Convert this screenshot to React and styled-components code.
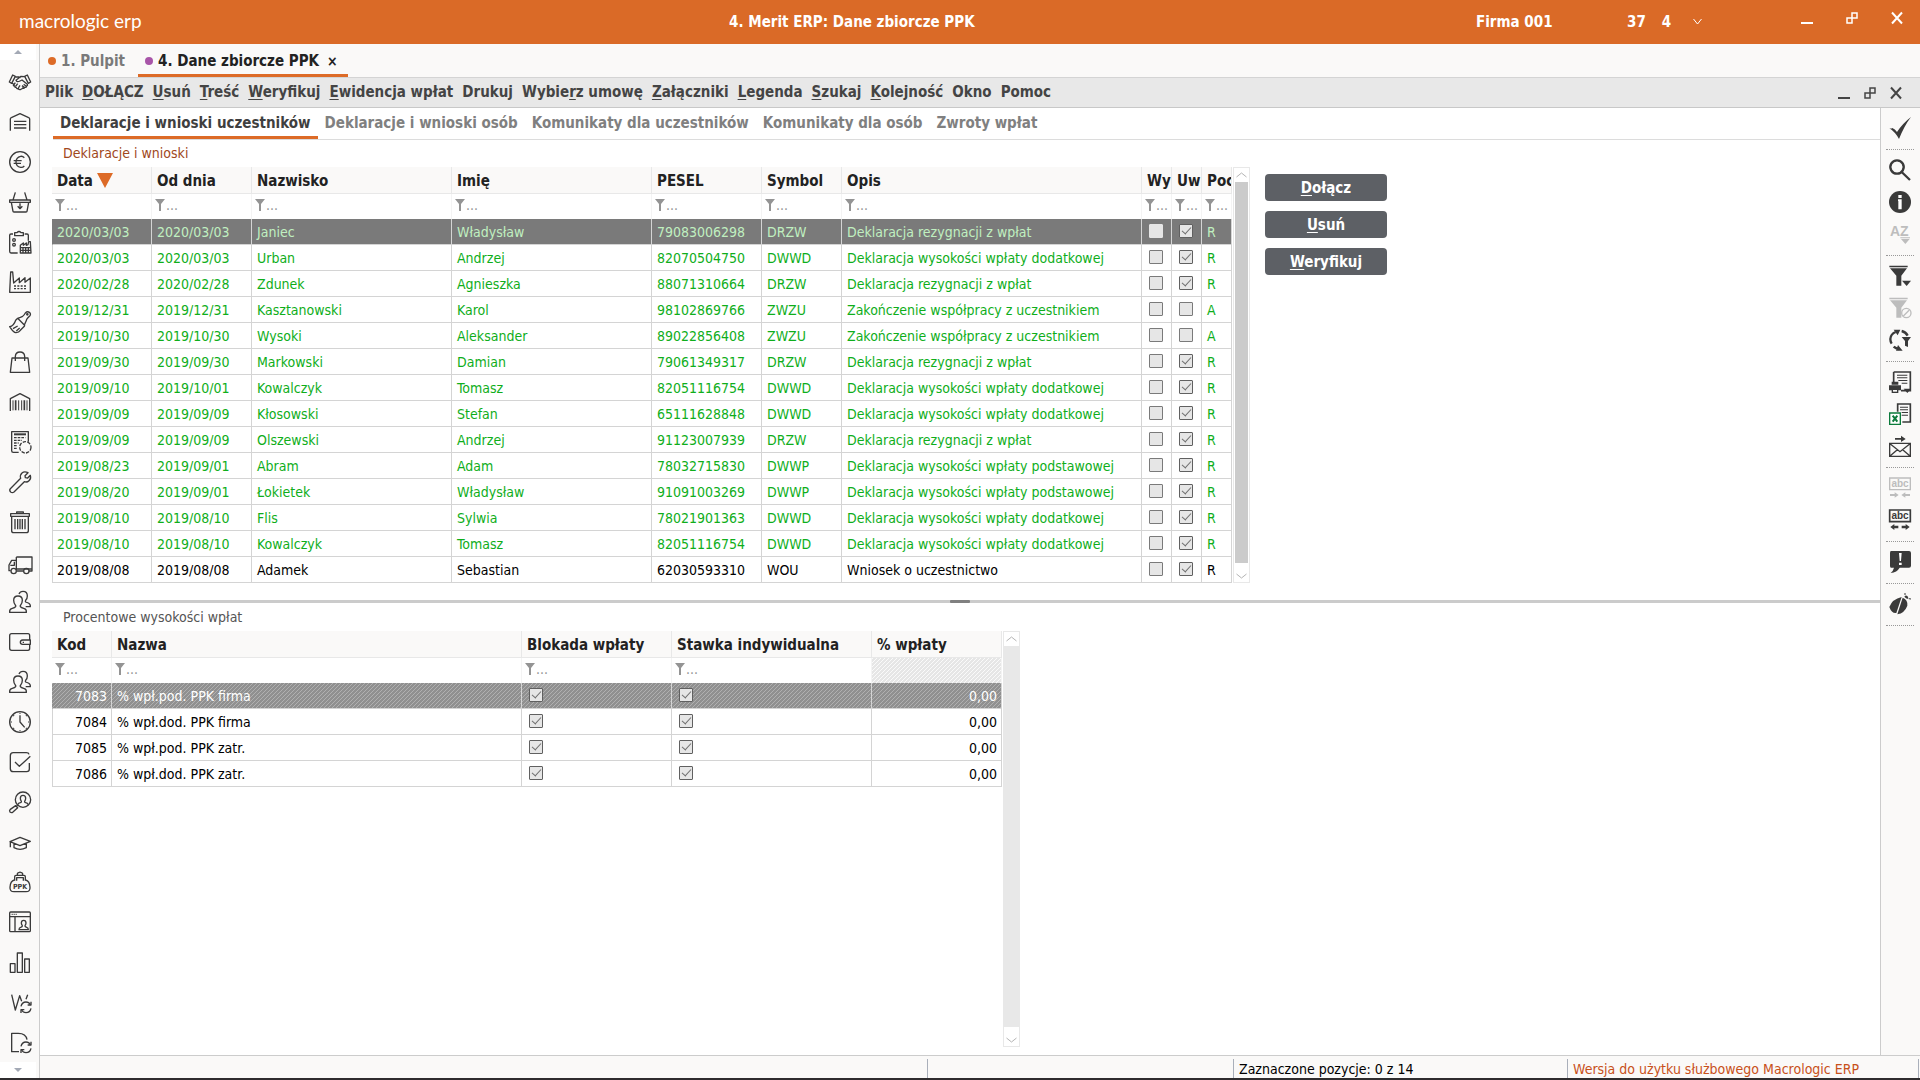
import { useState } from 'react';
import styled, { createGlobalStyle, css } from 'styled-components';

const MENU = [
  ['', '', 'Plik'],
  ['', 'D', 'OŁĄCZ'],
  ['', 'U', 'suń'],
  ['', 'T', 'reść'],
  ['', 'W', 'eryfikuj'],
  ['', 'E', 'widencja wpłat'],
  ['', '', 'Drukuj'],
  ['Wybie', 'r', 'z umowę'],
  ['', 'Z', 'ałączniki'],
  ['', 'L', 'egenda'],
  ['', 'S', 'zukaj'],
  ['', 'K', 'olejność'],
  ['', '', 'Okno'],
  ['', '', 'Pomoc'],
];

const SECTIONS = [
  'Deklaracje i wnioski uczestników',
  'Deklaracje i wnioski osób',
  'Komunikaty dla uczestników',
  'Komunikaty dla osób',
  'Zwroty wpłat',
];

const DESCRIPTIONS = {
  DRZW: 'Deklaracja rezygnacji z wpłat',
  DWWD: 'Deklaracja wysokości wpłaty dodatkowej',
  DWWP: 'Deklaracja wysokości wpłaty podstawowej',
  ZWZU: 'Zakończenie współpracy z uczestnikiem',
  WOU: 'Wniosek o uczestnictwo',
};

// date, valid from, surname, name, PESEL, symbol, checked, source
const DECLARATIONS = [
  ['2020/03/03', '2020/03/03', 'Janiec', 'Władysław', '79083006298', 'DRZW', true, 'R'],
  ['2020/03/03', '2020/03/03', 'Urban', 'Andrzej', '82070504750', 'DWWD', true, 'R'],
  ['2020/02/28', '2020/02/28', 'Zdunek', 'Agnieszka', '88071310664', 'DRZW', true, 'R'],
  ['2019/12/31', '2019/12/31', 'Kasztanowski', 'Karol', '98102869766', 'ZWZU', false, 'A'],
  ['2019/10/30', '2019/10/30', 'Wysoki', 'Aleksander', '89022856408', 'ZWZU', false, 'A'],
  ['2019/09/30', '2019/09/30', 'Markowski', 'Damian', '79061349317', 'DRZW', true, 'R'],
  ['2019/09/10', '2019/10/01', 'Kowalczyk', 'Tomasz', '82051116754', 'DWWD', true, 'R'],
  ['2019/09/09', '2019/09/09', 'Kłosowski', 'Stefan', '65111628848', 'DWWD', true, 'R'],
  ['2019/09/09', '2019/09/09', 'Olszewski', 'Andrzej', '91123007939', 'DRZW', true, 'R'],
  ['2019/08/23', '2019/09/01', 'Abram', 'Adam', '78032715830', 'DWWP', true, 'R'],
  ['2019/08/20', '2019/09/01', 'Łokietek', 'Władysław', '91091003269', 'DWWP', true, 'R'],
  ['2019/08/10', '2019/08/10', 'Flis', 'Sylwia', '78021901363', 'DWWD', true, 'R'],
  ['2019/08/10', '2019/08/10', 'Kowalczyk', 'Tomasz', '82051116754', 'DWWD', true, 'R'],
  ['2019/08/08', '2019/08/08', 'Adamek', 'Sebastian', '62030593310', 'WOU', true, 'R'],
];

const DECLARATION_COLUMNS = [
  ['Data', 100],
  ['Od dnia', 100],
  ['Nazwisko', 200],
  ['Imię', 200],
  ['PESEL', 110],
  ['Symbol', 80],
  ['Opis', 300],
  ['Wy', 30],
  ['Uw', 30],
  ['Poc', 30],
];

const RATES = [
  ['7083', '% wpł.pod. PPK firma'],
  ['7084', '% wpł.dod. PPK firma'],
  ['7085', '% wpł.pod. PPK zatr.'],
  ['7086', '% wpł.dod. PPK zatr.'],
];

const RATE_COLUMNS = [
  ['Kod', 60],
  ['Nazwa', 410],
  ['Blokada wpłaty', 150],
  ['Stawka indywidualna', 200],
  ['% wpłaty', 130],
];

const people = (
  <>
    <path d="M2 64q-1-9 6-11 10-3 12-6 1-3-1-5-5-6-5-14 0-13 13-13t13 13q0 8-5 14-2 2-1 5 2 3 12 6 7 2 6 11Z" />
    <path d="M30 9q3-8 12-8 13 0 13 14 0 8-5 13-2 3 0 5l8 3q7 3 6 11H50" />
  </>
);

const refresh = (
  <>
    <path d="M36 46q3-13 15-13 9 0 13 8M66 52q-3 13-15 13-9 0-13-8" />
    <path d="M66 32v10H56M36 66V56h10" />
  </>
);

const smallPerson = 'M30 56q0-6 5-7 6-2 5-5-3-4-3-8 0-8 7-8t7 8q0 4-3 8-1 3 5 5 5 1 5 7Z';

// every glyph is drawn on a 66 x 66 grid
const MODULES = [
  ['Kontrahenci', <>
    <path d="M11 12 1 33l7 4 11-21ZM55 12l10 21-7 4-11-21Z" />
    <path d="M19 18h11l5 2M47 17l-11-1-15 12q3 7 12 2l6-3 16 13q2 4-3 5" />
    <path d="m8 36 6 3M14 39q-3 5 3 6 0 5 5 5 1 4 6 3 2 4 8 2M19 35l-5 7M26 38l-6 8M33 43l-5 8M53 45q-1 5-6 4-2 5-6 2-2 4-6 3M44 40l8 6M39 44l7 5" />
  </>],
  ['Magazyn', <path d="M4 59V24q0-3 3-4L33 8l26 12q3 1 3 4v35M15 31h37M15 41h37M15 51h37" />],
  ['Finanse', <>
    <circle cx="33" cy="33" r="31" />
    <path d="M46 20q-5-5-11-4-14 3-14 17t14 16q6 1 11-4M14 29h24M14 37h22" />
  </>],
  ['Zakupy', <>
    <path d="M12 27 19 4M54 27 47 4M2 27h62v7H2ZM7 34l5 27q0 2 3 2h36q3 0 3-2l5-27" />
    <path d="M33 37v16M26 46l7 7 7-7" />
  </>],
  ['Zlecenia', <>
    <path d="M12 9H6q-4 0-4 4v48q0 5 4 5h20M47 9h7q4 0 4 4v16M17 5h7q6-7 12 0h7v9H17Z" />
    <circle cx="15" cy="27" r="4" />
    <circle cx="15" cy="41" r="4" />
    <path d="M34 66V43l9-7v7l9-7v7l5-2 2-9h5l2 34ZM34 50h30M34 58h30M42 50v14M50 50v14M58 50v14" />
  </>],
  ['Produkcja', <>
    <path d="M2 64 5 3h6l3 33 17-15v14l17-15v14l16-13v43Z" />
    <path strokeDasharray="6 4" d="M15 45h40M15 53h40" />
  </>],
  ['Remonty', <>
    <path d="m26 22 20 20q2 2 0 4L34 58q-4 6-13 7Q14 66 2 47q12-1 18-19ZM26 22l8-3 7-3q4-3 8-10 6-6 12-2 6 5 1 11-6 6-9 10-1 4-3 8l-4 9" />
    <path d="m12 53 14-8M22 60l10-9" />
    <circle cx="55" cy="10" r="2" />
  </>],
  ['Sprzedaż', <path d="M9 21h48l5 43H4ZM19 30V16Q20 3 33 3t14 13v14" />],
  ['Kody kreskowe', <>
    <path d="M4 60V23L33 8l29 15v37" />
    <path strokeWidth="3" d="M12 28v30M29 28v30M38 28v30M54 28v30" />
    <path strokeWidth="5" d="M20 28v30M46 28v30" />
  </>],
  ['Rozliczenia', <>
    <path d="M29 64H13q-5 0-5-5V2h50v30" />
    <path strokeWidth="6" d="M15 10h36" />
    <path strokeDasharray="8 3" d="M15 20h34M15 28h24M15 36h14M15 44h10M15 52h10" />
    <circle strokeDasharray="10 4" cx="49" cy="49" r="17" />
  </>],
  ['Serwis', <path d="m57 5-9 9 1 6 7 1 8-8q3 10-4 16-6 6-14 3L15 63q-5 4-10 0-5-5-1-10l31-31q-3-10 4-16 7-6 18-1Z" />],
  ['Kosz', <>
    <path d="M5 8h56v8H5ZM23 8V3h20v5M8 16v43q0 6 6 6h38q6 0 6-6V16" />
    <path d="M18 24v31M26 24v31M33 24v31M40 24v31M48 24v31" />
  </>],
  ['Transport', <>
    <path d="M22 18h47v42h-9M44 60H23M22 54h47M22 18v39M22 28H8L0 42v17h5M4 43h12V32" />
    <circle cx="14" cy="60" r="8" />
    <circle cx="52" cy="60" r="8" />
  </>],
  ['Kadry', people],
  ['Płace', <>
    <path d="M62 27V14q0-6-5-6H8q-6 0-6 6v38q0 6 6 6h49q5 0 5-6V40" />
    <path d="M64 27H41q-7 1-7 7t7 6h23ZM41 34h4" />
  </>],
  ['Pracownicy', people],
  ['Czas pracy', <>
    <circle cx="33" cy="33" r="31" />
    <path d="M33 13v20l14 16M33 5v3M33 58v3M5 33h3M58 33h3M13 13l2 2M53 13l-2 2M13 53l2-2M53 53l-2-2" />
  </>],
  ['Zadania', <path d="M61 36v18q0 8-8 8H13q-9 0-9-9V14q0-9 9-9h39q7 0 8 5M18 33l13 13 33-30" />],
  ['Rekrutacja', <>
    <circle cx="42" cy="26" r="23" />
    <path d="m26 43-5 4M20 44l6 6-15 14q-4 2-8-1-3-4 1-8ZM27 41q1-5 7-6 4-2 3-4-3-4-3-9 0-9 8-9t8 9q0 5-3 9-1 2 3 4 6 1 7 6" />
  </>],
  ['Szkolenia', <path d="m3 32 30-13 31 12-31 13ZM15 38v12q18 10 37 0V38M4 33v16" />],
  ['PPK', <>
    <path d="M16 27q-12 3-13 22-1 13 12 13h36q13 0 12-13-1-19-13-22" />
    <path d="M17 29V17q0-4 4-4h24q4 0 4 4v12M23 29v-9h20v9M26 13q-3-7 3-8 4-3 8 0 6 1 3 8" />
    <text x="33" y="53" textAnchor="middle">PPK</text>
  </>],
  ['Portal', <>
    <path d="M5 3h56q3 0 3 3v53q0 3-3 3H5q-3 0-3-3V6q0-3 3-3ZM2 17h62M18 17v45M8 10h3M14 10h3M20 10h3" />
    <path d={smallPerson} />
  </>],
  ['Raporty', <path d="M4 38h14v26H4ZM25 6h15v58H25ZM47 24h14v40H47Z" />],
  ['Wymiana W', <><path d="m8 11 11 46L32 14l6 17M56 11l-5 14" />{refresh}</>],
  ['Wymiana D', <><path d="M30 62H8V7h20q23 0 26 19" />{refresh}</>],
];

const pageSheet = 'M14 3h50v56H36M14 3v30';
const funnel = 'M1 2h55v5H1ZM3 10h51L37 32v30H22V32Z';

const TOOLS = [
  ['Zatwierdź', <path d="M0 33q6 3 10 0 8 3 14 12Q40 20 66 0 46 26 30 66 18 44 0 33Z" />],
  null,
  ['Szukaj', <path fill="none" stroke="currentColor" strokeWidth="7" d="M24 4a20 20 0 1 0 .1 0ZM38 39l25 24" />],
  ['Informacje', <>
    <circle cx="33" cy="33" r="33" />
    <path fill="#ffffff" d="M28 12h10v9H28ZM27 25h11v30H28V30h-1Z" />
  </>],
  ['Sortuj', <>
    <text x="3" y="39" fontSize="42">AZ</text>
    <path d="M34 43h29v3H34ZM36 48h26L49 63Z" />
  </>, true],
  null,
  ['Filtr', <><path d={funnel} /><path d="M39 47h27L53 63Z" /></>],
  ['Wyłącz filtr', <>
    <path d={funnel} />
    <circle cx="52" cy="48" r="14" fill="#faf9f8" stroke="currentColor" strokeWidth="4" />
    <path fill="none" stroke="currentColor" strokeWidth="4" d="M43 57 61 39" />
  </>, true],
  ['Odśwież filtr', <>
    <path fill="none" stroke="currentColor" strokeWidth="7" d="M38 6q12 3 18 14M20 9Q5 15 4 30q0 8 4 14M14 53q6 6 16 7" />
    <path d="m14 2 20 0-8 17ZM27 48l14 17-20 0ZM38 24h28l-9 12v18l-9-4V36Z" />
  </>],
  null,
  ['Drukuj', <>
    <path fill="none" stroke="currentColor" strokeWidth="5" d={pageSheet} />
    <path d="M24 11h31v3H24ZM24 19h31v3H24ZM28 27h27v3H28ZM38 35h17v3H38ZM8 32h20v9H8ZM0 43h36v15H0ZM8 54h20v12H8ZM44 53h22L55 66Z" />
    <path fill="#faf9f8" d="M12 57h12v5H12Z" />
  </>],
  ['Eksport do arkusza', <>
    <path fill="none" stroke="currentColor" strokeWidth="5" d="M26 26V3h38v54H40" />
    <path d="M33 11h24v3H33ZM33 19h24v3H33ZM38 27h19v3H38ZM38 35h19v3H38Z" />
    <path fill="#ffffff" stroke="#0b7a3b" strokeWidth="4" d="M2 30h32v34H2Z" />
    <path fill="none" stroke="#0b7a3b" strokeWidth="6" d="m11 38 14 18M25 38 11 56" />
  </>],
  ['Wyślij', <>
    <path d="M18 9h18V2l14 10-14 9v-7H18Z" />
    <path fill="none" stroke="currentColor" strokeWidth="4" d="M2 25h62v39H2ZM3 26l30 24 30-24M3 63l22-19M63 63 41 44" />
  </>],
  null,
  ['Zwiń tekst', <>
    <path fill="none" stroke="currentColor" strokeWidth="4" d="M2 3h62v35H2Z" />
    <text x="33" y="30" textAnchor="middle" fontSize="30">abc</text>
    <path d="M3 51h14v-5l12 8-12 8v-5H3ZM63 51H49v-5l-12 8 12 8v-5h14Z" />
  </>, true],
  ['Rozwiń tekst', <>
    <path fill="none" stroke="currentColor" strokeWidth="5" d="M2 3h62v35H2Z" />
    <text x="33" y="30" textAnchor="middle" fontSize="30">abc</text>
    <path d="M28 50H16v-5L4 54l12 9v-5h12ZM38 50h12v-5l12 9-12 9v-5H38Z" />
  </>],
  null,
  ['Komunikaty', <>
    <path d="M6 0h54q6 0 6 6v38q0 6-6 6H32q-8 14-27 16 8-7 10-16H6q-3 0-3-6V6q0-6 3-6Z" />
    <path fill="#ffffff" d="M30 6h8l-2 24h-4ZM30 35h8v7h-8Z" />
  </>],
  null,
  ['Błędy', <>
    <path d="M1 42Q10 18 38 12L22 60Q8 62 1 42ZM41 14q16 6 14 24-8 22-30 26ZM46 11q4-6 9-2 5 4 1 9-5-1-10-7Z" />
    <path fill="none" stroke="currentColor" strokeWidth="3" d="M48 6V0M59 17l7 1" />
  </>],
  null,
];

const FunnelIcon = () => (
  <svg width="10" height="12" viewBox="0 0 10 12" fill="currentColor" aria-hidden="true">
    <path d="M0 0h10L6 5v7H4V5Z" />
  </svg>
);

const Chevron = ({ up }) => (
  <svg width="11" height="6" viewBox="0 0 11 6" fill="none" stroke="currentColor" aria-hidden="true">
    <path d={up ? 'M0.5 5 5.5 1l5 4' : 'M0.5 1l5 4 5-4'} />
  </svg>
);

const WindowButtons = ({ light }) => (
  <WindowControls $light={light}>
    <WindowButton type="button" aria-label="Minimalizuj">
      <svg width="12" height="12" viewBox="0 0 12 12"><path fill="currentColor" d="M0 10h12v2H0Z" /></svg>
    </WindowButton>
    <WindowButton type="button" aria-label="Przywróć">
      <svg width="12" height="12" viewBox="0 0 12 12" fill="none" stroke="currentColor" strokeWidth="1.5">
        <path d="M6 1h5v5H6ZM1 6h5v5H1Z" />
      </svg>
    </WindowButton>
    <WindowButton type="button" aria-label="Zamknij">
      <svg width="12" height="12" viewBox="0 0 12 12" fill="none" stroke="currentColor" strokeWidth="2">
        <path d="m1 0.5 10 11M11 0.5 1 11.5" />
      </svg>
    </WindowButton>
  </WindowControls>
);

const ScrollBar = ({ full }) => (
  <ScrollTrack $full={full} aria-hidden="true">
    <ScrollEnd><Chevron up /></ScrollEnd>
    <ScrollThumb $full={full} />
    <ScrollEnd $bottom><Chevron /></ScrollEnd>
  </ScrollTrack>
);

const GridHead = ({ columns, sorted, locked }) => (
  <>
    <colgroup>
      {columns.map(([name, width]) => <Col key={name} $width={width} />)}
    </colgroup>
    <thead>
      <tr>
        {columns.map(([name]) => (
          <HeadCell key={name} scope="col">{name}{name === sorted && <SortMark />}</HeadCell>
        ))}
      </tr>
      <tr>
        {columns.map(([name]) => (
          <FilterCell key={name} $locked={name === locked}>
            {name !== locked && (
              <FilterButton type="button" aria-label={`Filtr: ${name}`}><FunnelIcon />...</FilterButton>
            )}
          </FilterCell>
        ))}
      </tr>
    </thead>
  </>
);

const App = () => {
  const [section, setSection] = useState(0);
  const [row, setRow] = useState(0);
  const [rate, setRate] = useState(0);

  return (
    <Page>
      <GlobalStyle />

      <TitleBar>
        <Logo>macrologic erp</Logo>
        <strong>4. Merit ERP: Dane zbiorcze PPK</strong>
        <strong>Firma 001</strong>
        <Counters>
          <span>37</span>
          <span>4</span>
          <svg width="9" height="7" viewBox="0 0 9 7" fill="none" stroke="currentColor"><path d="m0.5 1 4 5 4-5" /></svg>
        </Counters>
        <WindowButtons light />
      </TitleBar>

      <Body>
        <SideBar>
          <SideScroll type="button" aria-label="W górę"><SideArrow $up /></SideScroll>
          {MODULES.map(([name, drawing]) => (
            <ModuleButton key={name} type="button" aria-label={name}>
              <LineIcon viewBox="0 0 66 66">{drawing}</LineIcon>
            </ModuleButton>
          ))}
          <SideScroll type="button" aria-label="W dół"><SideArrow /></SideScroll>
        </SideBar>

        <Main>
          <Tabs>
            <Tab type="button"><Dot $color="#dd6b27" />1. Pulpit</Tab>
            <Tab type="button" $active><Dot $color="#a855a8" />4. Dane zbiorcze PPK<Close>×</Close></Tab>
          </Tabs>

          <MenuBar>
            {MENU.map(([before, key, after]) => (
              <MenuItem key={before + key + after} type="button">{before}<u>{key}</u>{after}</MenuItem>
            ))}
            <WindowButtons />
          </MenuBar>

          <Workspace>
            <Content>
              <SectionTabs>
                {SECTIONS.map((name, i) => (
                  <SectionTab key={name} type="button" $active={i === section} onClick={() => setSection(i)}>
                    {name}
                  </SectionTab>
                ))}
              </SectionTabs>

              <Pane>
                <PaneTitle $accent>Deklaracje i wnioski</PaneTitle>
                <PaneRow>
                  <Grid $width={1180}>
                    <GridHead columns={DECLARATION_COLUMNS} sorted="Data" />
                    <tbody>
                      {DECLARATIONS.map(([date, from, surname, name, pesel, symbol, checked, source], i) => (
                        <Row key={i} $selected={i === row} $sent={symbol !== 'WOU'} onClick={() => setRow(i)}>
                          <Cell>{date}</Cell>
                          <Cell>{from}</Cell>
                          <Cell>{surname}</Cell>
                          <Cell>{name}</Cell>
                          <Cell>{pesel}</Cell>
                          <Cell>{symbol}</Cell>
                          <Cell>{DESCRIPTIONS[symbol]}</Cell>
                          <Cell $check><Check aria-label="Wy" checked={false} readOnly $bare={i === row} /></Cell>
                          <Cell $check><Check aria-label="Uw" checked={checked} readOnly /></Cell>
                          <Cell>{source}</Cell>
                        </Row>
                      ))}
                    </tbody>
                  </Grid>
                  <ScrollBar />
                  <Actions>
                    <Action type="button"><u>D</u>ołącz</Action>
                    <Action type="button"><u>U</u>suń</Action>
                    <Action type="button"><u>W</u>eryfikuj</Action>
                  </Actions>
                </PaneRow>
              </Pane>

              <Splitter><SplitterGrip /></Splitter>

              <Pane $grow>
                <PaneTitle>Procentowe wysokości wpłat</PaneTitle>
                <PaneRow $grow>
                  <div>
                    <Grid $width={950}>
                      <GridHead columns={RATE_COLUMNS} locked="% wpłaty" />
                      <tbody>
                        {RATES.map(([code, name], i) => (
                          <Row key={code} $inactive={i === rate} onClick={() => setRate(i)}>
                            <Cell $right>{code}</Cell>
                            <Cell>{name}</Cell>
                            <Cell $check><Check aria-label="Blokada wpłaty" checked readOnly /></Cell>
                            <Cell $check><Check aria-label="Stawka indywidualna" checked readOnly /></Cell>
                            <Cell $right>0,00</Cell>
                          </Row>
                        ))}
                      </tbody>
                    </Grid>
                  </div>
                  <ScrollBar full />
                </PaneRow>
              </Pane>
            </Content>

            <ToolBar>
              {TOOLS.map((tool, i) => (tool ? (
                <ToolButton key={tool[0]} type="button" aria-label={tool[0]} disabled={tool[2]}>
                  <SolidIcon viewBox="0 0 66 66">{tool[1]}</SolidIcon>
                </ToolButton>
              ) : <ToolSeparator key={i} />))}
            </ToolBar>
          </Workspace>

          <StatusBar>
            <StatusCell />
            <StatusCell />
            <StatusCell>Zaznaczone pozycje: 0 z 14</StatusCell>
            <StatusCell $accent>Wersja do użytku służbowego Macrologic ERP</StatusCell>
          </StatusBar>
        </Main>
      </Body>
      <BottomEdge />
    </Page>
  );
};

export default App;

const GlobalStyle = createGlobalStyle`
  * {
    box-sizing: border-box;
  }

  body {
    margin: 0;
    background: #ffffff;
  }

  body, button, input {
    font-family: 'DejaVu Sans Condensed', 'Noto Sans', sans-serif;
    font-size: 14px;
  }

  button {
    margin: 0;
    padding: 0;
    border: 0;
    background: none;
    color: inherit;
    cursor: pointer;
  }

  svg {
    display: block;
    overflow: visible;
  }

  u {
    text-underline-offset: 2px;
  }
`;

const bold = css`
  font-size: 15px;
  font-weight: bold;
`;

const Page = styled.div`
  display: flex;
  flex-direction: column;
  min-height: 100vh;
`;

const TitleBar = styled.header`
  display: grid;
  grid-template-columns: 710fr 747fr 151fr 174fr 102fr;
  align-items: center;

  height: 44px;
  padding: 0 17px 9px 19px;

  background: #da6a27;
  color: #ffffff;

  & > strong {
    padding-top: 8px;

    ${bold}
  }
`;

const Logo = styled.div`
  padding-top: 6px;

  font-family: Lato, sans-serif;
  font-size: 19px;
`;

const Counters = styled.div`
  display: flex;
  align-items: center;
  gap: 16px;
  padding-top: 8px;

  ${bold}

  & > svg {
    margin-left: 6px;
  }
`;

const WindowControls = styled.div`
  display: flex;
  gap: ${(p) => (p.$light ? 33 : 14)}px;
  margin-left: auto;

  color: ${(p) => (p.$light ? '#ffffff' : '#444444')};
`;

const WindowButton = styled.button`
  display: block;
`;

const Body = styled.div`
  display: flex;
  flex: 1;
`;

const SideBar = styled.nav`
  display: flex;
  flex-direction: column;

  width: 40px;

  border-right: 1px solid #cccccc;
  background: #faf9f8;
`;

const SideScroll = styled.button`
  display: flex;
  align-items: center;
  justify-content: center;

  width: 36px;
  height: 16px;

  background: #ffffff;

  &:first-child {
    margin-bottom: 2px;
  }
`;

const SideArrow = styled.span`
  border: 4px solid transparent;
  border-${(p) => (p.$up ? 'bottom' : 'top')}-color: #a3a9b5;
  border-${(p) => (p.$up ? 'top' : 'bottom')}-width: 0;
`;

const ModuleButton = styled.button`
  display: flex;
  align-items: center;
  justify-content: center;

  height: 40px;
`;

const LineIcon = styled.svg`
  width: 22px;
  height: 22px;

  fill: none;
  stroke: #3a3a3a;
  stroke-width: 4;
  stroke-linejoin: round;

  & text {
    fill: #3a3a3a;
    stroke: none;
    font-size: 21px;
    font-weight: bold;
  }
`;

const Main = styled.main`
  display: flex;
  flex: 1;
  flex-direction: column;
  min-width: 0;
`;

const Tabs = styled.div`
  display: flex;
  gap: 3px;

  height: 34px;
  padding-left: 8px;

  border-bottom: 1px solid #d4d4d4;
  background: #faf9f8;
`;

const Tab = styled.button`
  display: flex;
  align-items: center;
  gap: 5px;

  padding: 3px 10px 0 0;

  border-bottom: 3px solid transparent;
  color: #7a7a7a;

  ${bold}

  ${(p) => p.$active && css`
    padding-left: 7px;

    border-color: #dd6b27;
    color: #222222;
  `}
`;

const Dot = styled.span`
  width: 8px;
  height: 8px;

  border-radius: 50%;
  background: ${(p) => p.$color};
`;

const Close = styled.span`
  margin-left: 3px;

  font-size: 14px;
`;

const MenuBar = styled.div`
  display: flex;
  align-items: center;
  gap: 9px;

  height: 30px;
  padding: 0 18px 0 5px;

  border-bottom: 1px solid #c8c8c8;
  background: #e8e8e8;
`;

const MenuItem = styled.button`
  padding-bottom: 2px;

  color: #444444;

  ${bold}
`;

const Workspace = styled.div`
  display: flex;
  flex: 1;
`;

const Content = styled.div`
  display: flex;
  flex: 1;
  flex-direction: column;
  min-width: 0;
`;

const SectionTabs = styled.div`
  display: flex;

  height: 32px;
  margin-left: 13px;

  border-bottom: 1px solid #dcdcdc;
`;

const SectionTab = styled.button`
  padding: 2px 7px 0;

  border-bottom: 3px solid ${(p) => (p.$active ? '#dd6b27' : 'transparent')};
  color: ${(p) => (p.$active ? '#3f3f3f' : '#808080')};

  ${bold}
`;

const Pane = styled.section`
  display: flex;
  flex-direction: column;

  padding: 0 12px 17px;

  ${(p) => p.$grow && css`
    flex: 1;
    padding-bottom: 8px;
  `}
`;

const PaneTitle = styled.h2`
  margin: 0;
  padding-left: 11px;

  color: ${(p) => (p.$accent ? '#a0481c' : '#555555')};

  font-size: 14px;
  font-weight: normal;
  line-height: ${(p) => (p.$accent ? 27 : 28)}px;
`;

const PaneRow = styled.div`
  display: flex;
  flex: ${(p) => (p.$grow ? '1' : 'none')};
`;

const Grid = styled.table`
  width: ${(p) => p.$width}px;

  table-layout: fixed;
  border-spacing: 0;
`;

const Col = styled.col`
  width: ${(p) => p.$width}px;
`;

const HeadCell = styled.th`
  height: 27px;
  padding: 2px 0 0 5px;

  overflow: hidden;

  border-right: 1px solid #e8e8e8;
  border-bottom: 1px solid #e8e8e8;
  background: #faf9f8;
  color: #222222;

  line-height: 20px;
  text-align: left;
  white-space: nowrap;

  ${bold}
`;

const SortMark = styled.span`
  display: inline-block;

  margin-left: 4px;

  border: 8px solid transparent;
  border-top: 15px solid #dd6b27;
  border-bottom: 0;

  vertical-align: -2px;
`;

const hatch = (line, ground) => css`
  background-image: linear-gradient(
    135deg,
    ${line} 0 12.5%, ${ground} 12.5% 50%,
    ${line} 50% 62.5%, ${ground} 62.5%
  );
  background-size: 4px 4px;
`;

const FilterCell = styled.td`
  height: 25px;
  padding: 0 0 4px 3px;

  border-right: 1px solid #f4f4f4;

  ${(p) => p.$locked && hatch('#fafafa', '#e6e6e6')}
`;

const FilterButton = styled.button`
  display: flex;
  align-items: center;
  gap: 1px;

  color: #949494;

  line-height: 20px;
`;

const Cell = styled.td`
  height: 26px;
  padding: 0 0 0 5px;

  overflow: hidden;

  border-right: 1px solid #d4d4d4;
  border-bottom: 1px solid #d4d4d4;

  line-height: 20px;
  white-space: nowrap;

  &:first-child {
    padding-left: 4px;

    border-left: 1px solid #d4d4d4;
  }

  ${(p) => p.$right && css`
    padding-right: 4px;

    text-align: right;
  `}

  ${(p) => p.$check && css`
    padding-left: 7px;
  `}
`;

const Row = styled.tr`
  color: ${(p) => (p.$sent ? '#0fae1b' : '#000000')};

  ${(p) => p.$selected && css`
    background: #7a7a7a;
    color: #c0f0c0;
  `}

  ${(p) => p.$inactive && css`
    ${hatch('#b0b0b0', '#909090')}
    color: #ffffff;
  `}

  ${(p) => (p.$selected || p.$inactive) && css`
    & > ${Cell}:first-child {
      border-left-color: transparent;
    }
  `}
`;

const Check = styled.input.attrs({ type: 'checkbox' })`
  display: grid;
  place-content: center;

  width: 14px;
  height: 14px;
  margin: 0 0 2px;

  appearance: none;
  border: 1px solid ${(p) => (p.$bare ? '#e6e6e6' : '#7a7a7a')};
  border-radius: 1px;
  background: #e6e6e6;

  &:checked {
    border-color: #606060;
  }

  &:checked::before {
    content: '';

    width: 4px;
    height: 8px;
    margin-bottom: 2px;

    border: solid #707070;
    border-width: 0 1px 1px 0;

    transform: rotate(42deg);
  }
`;

const ScrollTrack = styled.div`
  display: flex;
  flex-direction: column;

  width: 17px;
  margin-left: 1px;

  border: 1px solid #e8e8e8;
  background: ${(p) => (p.$full ? '#e8e8e8' : '#ffffff')};
`;

const ScrollEnd = styled.div`
  display: flex;
  align-items: center;
  justify-content: center;

  height: ${(p) => (p.$bottom ? 19 : 14)}px;
  padding-top: ${(p) => (p.$bottom ? 7 : 0)}px;

  background: #ffffff;
  color: #b4b4b4;
`;

const ScrollThumb = styled.div`
  flex: 1;

  margin: 0 1px;

  background: ${(p) => (p.$full ? 'transparent' : '#cbcbcb')};
`;

const Actions = styled.div`
  display: flex;
  flex-direction: column;
  gap: 10px;

  padding: 7px 0 0 15px;
`;

const Action = styled.button`
  width: 122px;
  height: 27px;

  border-radius: 4px;
  background: #5d6065;
  color: #ffffff;

  ${bold}
`;

const Splitter = styled.div`
  display: flex;
  justify-content: center;

  height: 3px;

  background: #cbcbcb;
`;

const SplitterGrip = styled.span`
  width: 20px;

  border-radius: 1px;
  background: #808080;
`;

const ToolBar = styled.aside`
  display: flex;
  flex-direction: column;

  width: 40px;
  padding: 4px 2px 0 0;

  border-left: 1px solid #cccccc;
  background: #faf9f8;
`;

const ToolButton = styled.button`
  display: flex;
  align-items: center;
  justify-content: center;

  height: 32px;

  color: #3a3a3a;

  &:disabled {
    color: #bdbdbd;
  }
`;

const SolidIcon = styled.svg`
  width: 22px;
  height: 22px;

  fill: currentColor;

  & text {
    font-family: 'Liberation Sans', sans-serif;
    font-weight: bold;
  }
`;

const ToolSeparator = styled.hr`
  width: 28px;
  height: 6px;
  margin: 0 auto 4px;

  border: 0;
  border-bottom: 1px dotted #999999;
`;

const StatusBar = styled.footer`
  display: grid;
  grid-template-columns: 888fr 306fr 334fr 351fr;

  height: 23px;
  padding: 3px 1px 0 0;

  border-top: 1px solid #cccccc;
  background: #faf9f8;
`;

const StatusCell = styled.div`
  padding-left: 5px;

  border-right: 1px solid #a9afba;
  color: ${(p) => (p.$accent ? '#c8501a' : '#000000')};

  line-height: 20px;
  white-space: nowrap;
`;

const BottomEdge = styled.div`
  height: 2px;

  background: #2f2c2e;
`;
